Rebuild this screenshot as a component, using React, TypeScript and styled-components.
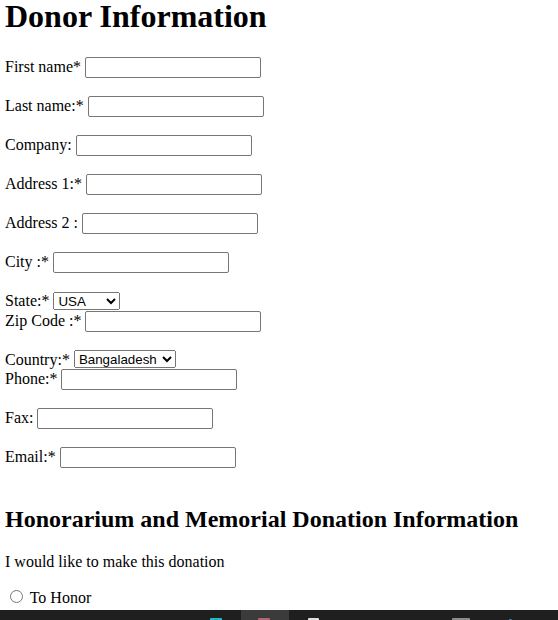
import React from "react";
import styled, { createGlobalStyle } from "styled-components";

const GlobalStyle = createGlobalStyle`
  html, body {
    margin: 0;
    padding: 0;
    overflow: hidden;
    background: #ffffff;
  }
  body {
    padding: 0 5px;
    font-family: "Liberation Serif", "Times New Roman", serif;
    font-size: 16px;
    color: #000000;
  }
`;

const Page = styled.div`
  display: block;
`;

const Title = styled.h1`
  font-size: 32px;
  font-weight: bold;
  line-height: 33px;
  margin: 0 0 23px;
`;

const SubTitle = styled.h2`
  font-size: 24px;
  font-weight: bold;
  margin: 37px 0 20px;
`;

const Field = styled.p`
  margin: 16px 0;
`;

const TextInput = styled.input`
  box-sizing: border-box;
  width: 176px;
  height: 21px;
  margin: 1px 0;
  padding: 1px 2px;
  border: 1px solid #767676;
  border-radius: 2px;
  font-family: "Liberation Sans", Arial, sans-serif;
  font-size: 13.33px;
  vertical-align: baseline;
  background: #ffffff;
`;

const Select = styled.select<{ $w: number }>`
  width: ${(p) => p.$w}px;
  height: 18px;
  margin: 1.5px 0 0;
  font-family: "Liberation Sans", Arial, sans-serif;
  font-size: 13.33px;
  color: #000000;
`;

const Radio = styled.input`
  margin: 3px 3px 0 5px;
`;

const Taskbar = styled.div`
  position: fixed;
  left: 0;
  right: 0;
  bottom: 0;
  height: 10px;
  background: #1f1f1f;
  display: flex;
  align-items: flex-end;
`;

const TaskIcon = styled.span<{ $color: string; $w: number; $ml: number; $h?: number }>`
  display: block;
  width: ${(p) => p.$w}px;
  height: ${(p) => p.$h ?? 2}px;
  margin-left: ${(p) => p.$ml}px;
  background: ${(p) => p.$color};
  border-radius: 1px 1px 0 0;
`;

const ActiveSlot = styled.div`
  display: flex;
  align-items: flex-end;
  width: 48px;
  height: 10px;
  margin-left: 19px;
  background: #3b3b3b;
`;

type F = { label: string };
const TextField = ({ label }: F) => (
  <Field>
    {label} <TextInput type="text" />
  </Field>
);

export default function App() {
  return (
    <Page>
      <GlobalStyle />
      <Title>Donor Information</Title>
      <TextField label="First name*" />
      <TextField label="Last name:*" />
      <TextField label="Company:" />
      <TextField label="Address 1:*" />
      <TextField label="Address 2 :" />
      <TextField label="City :*" />
      <Field>
        State:*{" "}
        <Select $w={67} defaultValue="USA">
          <option value="USA">USA</option>
          <option value="Canada">Canada</option>
        </Select>
        <br />
        Zip Code :* <TextInput type="text" />
      </Field>
      <Field>
        Country:*{" "}
        <Select $w={102} defaultValue="Bangaladesh">
          <option value="Bangaladesh">Bangaladesh</option>
          <option value="USA">USA</option>
        </Select>
        <br />
        Phone:* <TextInput type="text" />
      </Field>
      <TextField label="Fax:" />
      <TextField label="Email:*" />
      <SubTitle>Honorarium and Memorial Donation Information</SubTitle>
      <Field>I would like to make this donation</Field>
      <Field>
        <Radio type="radio" name="kind" /> To Honor
        <br />
        <Radio type="radio" name="kind" /> In Memory
      </Field>
      <Taskbar>
        <TaskIcon $color="#22b8c8" $w={12} $ml={210} />
        <ActiveSlot>
          <TaskIcon $color="#b06478" $w={12} $ml={17} />
        </ActiveSlot>
        <TaskIcon $color="#e0e0e0" $w={11} $ml={19} />
        <TaskIcon $color="#8c8c8c" $w={18} $ml={133} />
        <TaskIcon $color="#3a7bd5" $w={3} $ml={39} $h={1} />
      </Taskbar>
    </Page>
  );
}
